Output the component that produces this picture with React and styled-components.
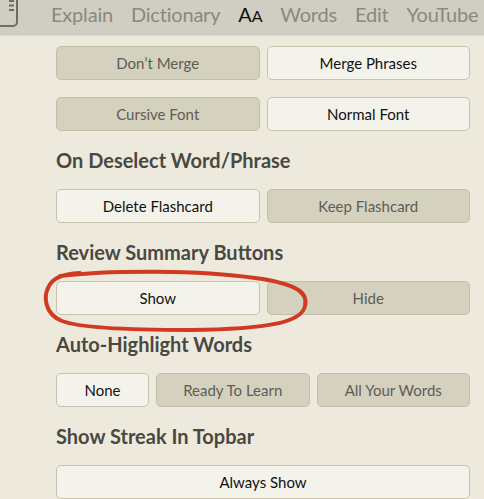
import React from 'react'
import styled, { createGlobalStyle } from 'styled-components';

const GlobalStyle = createGlobalStyle`
  html, body {
    margin: 0;
    padding: 0;
    background: #edeadd;
    font-family: Lato, "Open Sans", sans-serif;
  }
  * { box-sizing: border-box; }
`

const Page = styled.div`
  width: 484px;
  height: 499px;
  overflow: hidden;
  background: #edeadd;
  position: relative;
`
const Topbar = styled.div`
  height: 36px;
  background: #d0cdc2;
  border-bottom: 1px solid #dcd9ce;
  display: flex;
  align-items: center;
  gap: 18px;
  white-space: nowrap;
  overflow: hidden;
`
const NavIcon = styled.svg`
  width: 20px;
  height: 36px;
  flex-shrink: 0;
  margin-right: 13px;
  align-self: flex-start;
`
const NavItem = styled.span`
  font-size: 20px;
  letter-spacing: -0.2px;
  color: ${p => p.active ? '#111' : '#8b887f'};
  line-height: 1;
  padding-bottom: 8px;
`
const SmallA = styled.span`
  font-size: 16px;
`
const Content = styled.div`
  padding: 10px 14px 0 56px;
  display: flex;
  flex-direction: column;
  gap: 17px;
`
const Heading = styled.div`
  height: 24px;
  font-size: 20px;
  font-weight: 700;
  color: #4a4843;
  line-height: 24px;
`
const Row = styled.div`
  display: grid;
  grid-template-columns: ${p => p.cols || '1fr 1fr'};
  gap: 7px;
`
const Button = styled.button`
  height: 34px;
  border-radius: 5px;
  border: 1px solid ${p => p.active ? '#c7c3ad' : '#c2bea8'};
  background: ${p => p.active ? '#f4f3eb' : '#d4d1bf'};
  color: ${p => p.active ? '#111' : '#5f5c55'};
  font-family: Lato, "Open Sans", sans-serif;
  font-size: 15px;
  padding: 0;
  cursor: pointer;
`
const Annotation = styled.svg`
  position: absolute;
  left: 40px;
  top: 266px;
  width: 275px;
  height: 70px;
  pointer-events: none;
`

const App = () => {
  return (
    <Page>
      <GlobalStyle/>
      <Topbar>
        <NavIcon viewBox="0 0 20 36">
          <rect x="-8" y="-8" width="25" height="34" rx="4" fill="none" stroke="#6f6c64" strokeWidth="2"/>
          <rect x="9" y="0" width="5" height="2" fill="#6f6c64"/>
          <rect x="9" y="4.5" width="5" height="2" fill="#6f6c64"/>
          <rect x="9" y="9" width="5" height="2" fill="#6f6c64"/>
        </NavIcon>
        <NavItem>Explain</NavItem>
        <NavItem>Dictionary</NavItem>
        <NavItem active>A<SmallA>A</SmallA></NavItem>
        <NavItem>Words</NavItem>
        <NavItem>Edit</NavItem>
        <NavItem>YouTube</NavItem>
      </Topbar>
      <Content>
        <Row>
          <Button>Don’t Merge</Button>
          <Button active>Merge Phrases</Button>
        </Row>
        <Row>
          <Button>Cursive Font</Button>
          <Button active>Normal Font</Button>
        </Row>
        <Heading>On Deselect Word/Phrase</Heading>
        <Row>
          <Button active>Delete Flashcard</Button>
          <Button>Keep Flashcard</Button>
        </Row>
        <Heading>Review Summary Buttons</Heading>
        <Row>
          <Button active>Show</Button>
          <Button>Hide</Button>
        </Row>
        <Heading>Auto-Highlight Words</Heading>
        <Row cols="93px 1fr 1fr">
          <Button active>None</Button>
          <Button>Ready To Learn</Button>
          <Button>All Your Words</Button>
        </Row>
        <Heading>Show Streak In Topbar</Heading>
        <Row cols="1fr">
          <Button active>Always Show</Button>
        </Row>
      </Content>
      <Annotation viewBox="0 0 275 70">
        <path
          d="M20 10 C70 4 160 4 215 12 C260 18 268 28 265 40 C262 56 230 63 150 64 C90 64 40 62 22 55 C4 48 4 30 8 22 C12 12 22 8 40 7"
          fill="none" stroke="#d03a20" strokeWidth="4" strokeLinecap="round"/>
      </Annotation>
    </Page>
  )
}

export default App
